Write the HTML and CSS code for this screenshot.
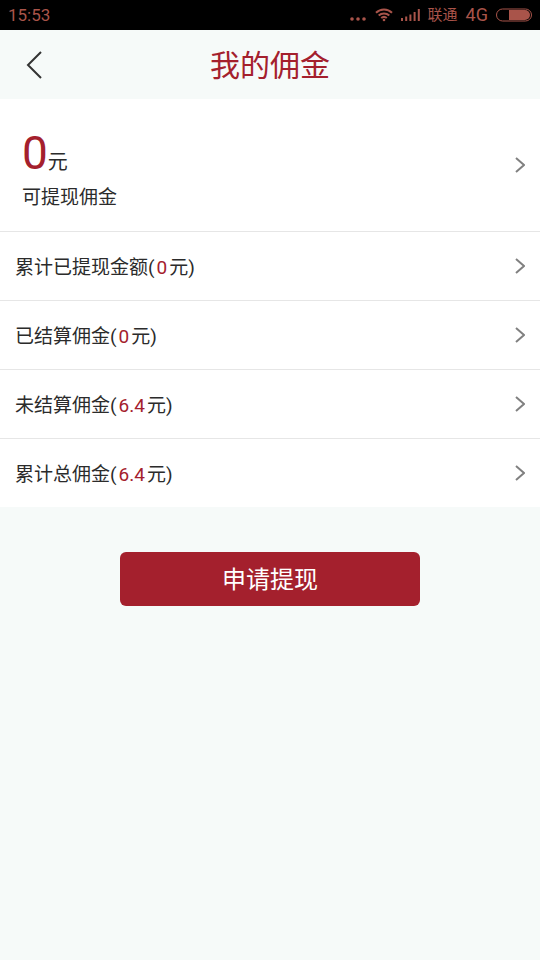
FILE: index.html
```
<!DOCTYPE html>
<html lang="zh-CN">
<head>
    <meta charset="UTF-8">
    <meta name="viewport" content="width=device-width, initial-scale=1.0">
    <title>我的佣金</title>
    <link rel="stylesheet" href="styles.css">
</head>
<body>
    <div class="status-bar">
        <span class="time">15:53</span>
        <div class="status-icons">
            <svg class="dots" width="17" height="16" viewBox="0 0 17 16">
                <circle cx="2" cy="12" r="1.8"/>
                <circle cx="8" cy="12" r="1.8"/>
                <circle cx="14" cy="12" r="1.8"/>
            </svg>
            <svg class="wifi" width="18" height="16" viewBox="0 0 18 16">
                <path d="M1 5.700a11.500 11.500 0 0 1 16 0M3.700 8.500a7.700 7.700 0 0 1 10.600 0M6.200 11.100a4.200 4.200 0 0 1 5.600 0"/>
                <circle cx="9" cy="13" r="1.3"/>
            </svg>
            <svg class="signal" width="19" height="16" viewBox="0 0 19 16">
                <path d="M1 14v-3M5.200 14V9.500M9.400 14V7.500M13.600 14V5M17.800 14V2"/>
            </svg>
            <span class="carrier">联通</span>
            <span class="network">4G</span>
            <svg class="battery" width="36" height="14" viewBox="0 0 36 14">
                <rect class="shell" x="0.5" y="1" width="35" height="12" rx="6"/>
                <path class="level" d="M13 2h16a5 5 0 0 1 0 10H13z"/>
            </svg>
        </div>
    </div>

    <header class="header">
        <a class="back" href="#" aria-label="返回">
            <svg width="16" height="28" viewBox="0 0 16 28">
                <path d="M15 1L2 14l13 13"/>
            </svg>
        </a>
        <h1>我的佣金</h1>
    </header>

    <main>
        <nav class="list">
            <a class="row balance" href="#">
                <div>
                    <div class="amount"><span class="num">0</span>元</div>
                    <div class="label">可提现佣金</div>
                </div>
                <svg class="arrow" width="10" height="16" viewBox="0 0 10 16"><path d="M1 1l8 7-8 7"/></svg>
            </a>
            <a class="row" href="#">
                <span class="text">累计已提现金额(<span class="num">0</span>元)</span>
                <svg class="arrow" width="10" height="16" viewBox="0 0 10 16"><path d="M1 1l8 7-8 7"/></svg>
            </a>
            <a class="row" href="#">
                <span class="text">已结算佣金(<span class="num">0</span>元)</span>
                <svg class="arrow" width="10" height="16" viewBox="0 0 10 16"><path d="M1 1l8 7-8 7"/></svg>
            </a>
            <a class="row" href="#">
                <span class="text">未结算佣金(<span class="num">6.4</span>元)</span>
                <svg class="arrow" width="10" height="16" viewBox="0 0 10 16"><path d="M1 1l8 7-8 7"/></svg>
            </a>
            <a class="row" href="#">
                <span class="text">累计总佣金(<span class="num">6.4</span>元)</span>
                <svg class="arrow" width="10" height="16" viewBox="0 0 10 16"><path d="M1 1l8 7-8 7"/></svg>
            </a>
        </nav>

        <div class="actions">
            <button class="withdraw" type="button">申请提现</button>
        </div>
    </main>
</body>
</html>
```
FILE: styles.css
```
:root {
    --primary-color: #a4202d;
    --background-color: #f6faf9;
    --text-color: #2b2b2b;
    --line-color: #e6e6e6;
    --status-color: #a9544a;
}

* {
    box-sizing: border-box;
    margin: 0;
    padding: 0;
}

body {
    font-family: Roboto, "Noto Sans CJK SC", sans-serif;
    background-color: var(--background-color);
    color: var(--text-color);
    font-size: 19px;
}

a {
    color: inherit;
    text-decoration: none;
}

svg {
    display: block;
    fill: none;
}

.status-bar {
    display: flex;
    align-items: center;
    justify-content: space-between;
    height: 30px;
    padding: 0 8px;
    background: #000;
    color: var(--status-color);
    font-size: 17px;
    line-height: 30px;
}

.status-icons {
    display: flex;
    align-items: center;
    gap: 8px;
}

.carrier {
    font-size: 15px;
}

.network {
    font-size: 18px;
}

.dots,
.wifi circle {
    fill: var(--status-color);
}

.wifi,
.signal {
    stroke: var(--status-color);
    stroke-width: 2;
}

.wifi circle {
    stroke: none;
}

.shell {
    stroke: var(--status-color);
}

.level {
    fill: var(--status-color);
}

.header {
    display: grid;
    grid-template-columns: 60px 1fr 60px;
    align-items: center;
    height: 69px;
}

.back {
    padding-left: 26px;
}

.back path {
    stroke: #333;
    stroke-width: 2;
}

h1 {
    padding-bottom: 4px;
    color: var(--primary-color);
    font-size: 30px;
    font-weight: 400;
    text-align: center;
}

.list {
    background: #fff;
}

.row {
    display: flex;
    align-items: center;
    justify-content: space-between;
    min-height: 69px;
    padding: 0 15px;
    border-bottom: 1px solid var(--line-color);
}

.row:last-child {
    min-height: 68px;
    border-bottom: none;
}

.text {
    padding-bottom: 2px;
}

.text .num {
    margin: 0 2px;
}

.balance {
    min-height: 133px;
    padding-left: 22px;
}

.amount {
    padding-top: 8px;
    font-size: 20px;
    line-height: 48px;
}

.amount .num {
    font-size: 46px;
}

.label {
    line-height: 24px;
}

.num {
    color: var(--primary-color);
}

.arrow path {
    stroke: #808080;
    stroke-width: 2;
}

.actions {
    padding: 45px 120px;
}

.withdraw {
    display: block;
    width: 100%;
    height: 54px;
    padding-bottom: 3px;
    border: none;
    border-radius: 6px;
    background: var(--primary-color);
    color: #fff;
    font-family: inherit;
    font-size: 24px;
    cursor: pointer;
}
```
